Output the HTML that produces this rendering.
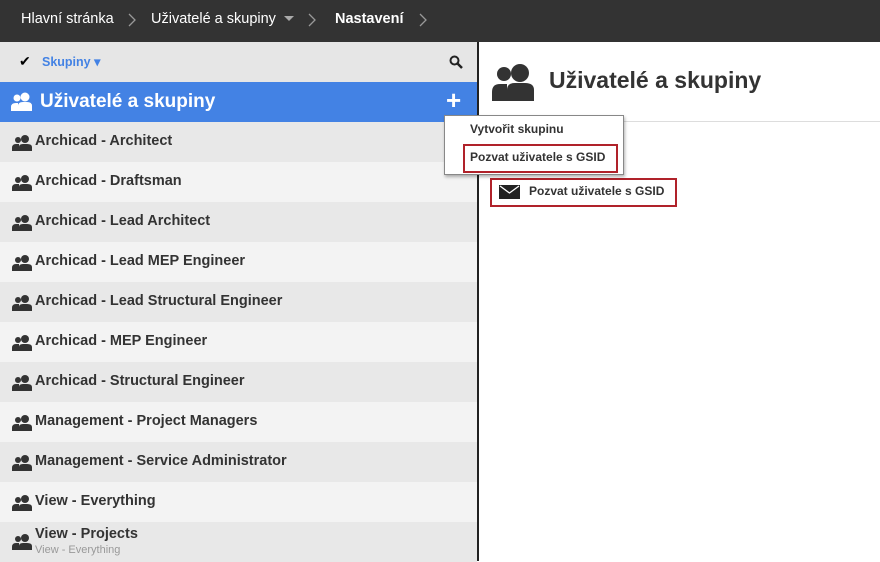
<!DOCTYPE html><html><head><style>
body{margin:0;width:880px;height:561px;overflow:hidden;font-family:"Liberation Sans",sans-serif;background:#fff;position:relative}
.top{position:absolute;left:0;top:0;width:880px;height:42px;background:#333;color:#fff;font-size:15px}
.top span{position:absolute;top:11px}
.left{position:absolute;left:0;top:42px;width:477px;height:519px;background:#f0f0f0}
.vline{position:absolute;left:477px;top:42px;width:2px;height:519px;background:#222}
.filter{height:40px;background:#e6e6e6;position:relative}
.blue{height:40px;background:#4382e4;color:#fff;font-weight:bold;font-size:19px;position:relative}
.row{height:40px;position:relative;font-weight:bold;font-size:14.5px;color:#333}
.row:nth-child(odd){background:#e8e8e8}.row:nth-child(even){background:#f3f3f3}
.row .t{position:absolute;left:35px;top:11px}
.ic{position:absolute;left:12px;top:13px}
</style></head><body>
<div class="top">
<span style="left:21px;font-size:14.5px">Hlavní stránka</span>
<svg style="position:absolute;left:128px;top:13px" width="8" height="14"><path d="M1 1l6 6-6 6" stroke="#999" fill="none" stroke-width="1.3"/></svg>
<span style="left:151px;font-size:14.5px">Uživatelé a skupiny</span>
<span style="left:284px;top:16px;width:0;height:0;border:5px solid transparent;border-top-color:#aaa"></span>
<svg style="position:absolute;left:308px;top:13px" width="8" height="14"><path d="M1 1l6 6-6 6" stroke="#999" fill="none" stroke-width="1.3"/></svg>
<span style="left:335px;font-weight:bold;font-size:14.5px">Nastavení</span>
<svg style="position:absolute;left:419px;top:13px" width="8" height="14"><path d="M1 1l6 6-6 6" stroke="#999" fill="none" stroke-width="1.3"/></svg>
</div>
<div class="left">
<div class="filter"><span style="position:absolute;left:19px;top:11px;font-size:14px">✔</span><span style="position:absolute;left:42px;top:12px;color:#4382e4;font-weight:bold;font-size:12.5px">Skupiny ▾</span>
<svg style="position:absolute;left:449px;top:13px" width="14" height="14"><circle cx="5.5" cy="5.5" r="4" stroke="#222" stroke-width="2" fill="none"/><path d="M8.5 8.5L13 13" stroke="#222" stroke-width="2.5"/></svg></div>
<div class="blue"><svg style="position:absolute;left:11px;top:10px" width="22" height="20"><circle cx="6" cy="6" r="3.5" fill="#fff"/><circle cx="14" cy="5" r="4.5" fill="#fff"/><path d="M0 19v-4q0-4 5-4h2v8z" fill="#fff"/><path d="M7 19v-5q0-4 5-4h4q5 0 5 4v5z" fill="#fff"/></svg><span style="position:absolute;left:40px;top:9px">Uživatelé a skupiny</span><span style="position:absolute;left:446px;top:3px;font-size:26px">+</span></div>
<div>
<div class="row"><svg class="ic" width="22" height="16"><circle cx="6" cy="5" r="3" fill="#333"/><circle cx="13" cy="4" r="4" fill="#333"/><path d="M0 16v-3q0-4 4-4h3v7z" fill="#333"/><path d="M7 16v-4q0-3 4-3h4q5 0 5 3v4z" fill="#333"/></svg><span class="t">Archicad - Architect</span></div>
<div class="row"><svg class="ic" width="22" height="16"><circle cx="6" cy="5" r="3" fill="#333"/><circle cx="13" cy="4" r="4" fill="#333"/><path d="M0 16v-3q0-4 4-4h3v7z" fill="#333"/><path d="M7 16v-4q0-3 4-3h4q5 0 5 3v4z" fill="#333"/></svg><span class="t">Archicad - Draftsman</span></div>
<div class="row"><svg class="ic" width="22" height="16"><circle cx="6" cy="5" r="3" fill="#333"/><circle cx="13" cy="4" r="4" fill="#333"/><path d="M0 16v-3q0-4 4-4h3v7z" fill="#333"/><path d="M7 16v-4q0-3 4-3h4q5 0 5 3v4z" fill="#333"/></svg><span class="t">Archicad - Lead Architect</span></div>
<div class="row"><svg class="ic" width="22" height="16"><circle cx="6" cy="5" r="3" fill="#333"/><circle cx="13" cy="4" r="4" fill="#333"/><path d="M0 16v-3q0-4 4-4h3v7z" fill="#333"/><path d="M7 16v-4q0-3 4-3h4q5 0 5 3v4z" fill="#333"/></svg><span class="t">Archicad - Lead MEP Engineer</span></div>
<div class="row"><svg class="ic" width="22" height="16"><circle cx="6" cy="5" r="3" fill="#333"/><circle cx="13" cy="4" r="4" fill="#333"/><path d="M0 16v-3q0-4 4-4h3v7z" fill="#333"/><path d="M7 16v-4q0-3 4-3h4q5 0 5 3v4z" fill="#333"/></svg><span class="t">Archicad - Lead Structural Engineer</span></div>
<div class="row"><svg class="ic" width="22" height="16"><circle cx="6" cy="5" r="3" fill="#333"/><circle cx="13" cy="4" r="4" fill="#333"/><path d="M0 16v-3q0-4 4-4h3v7z" fill="#333"/><path d="M7 16v-4q0-3 4-3h4q5 0 5 3v4z" fill="#333"/></svg><span class="t">Archicad - MEP Engineer</span></div>
<div class="row"><svg class="ic" width="22" height="16"><circle cx="6" cy="5" r="3" fill="#333"/><circle cx="13" cy="4" r="4" fill="#333"/><path d="M0 16v-3q0-4 4-4h3v7z" fill="#333"/><path d="M7 16v-4q0-3 4-3h4q5 0 5 3v4z" fill="#333"/></svg><span class="t">Archicad - Structural Engineer</span></div>
<div class="row"><svg class="ic" width="22" height="16"><circle cx="6" cy="5" r="3" fill="#333"/><circle cx="13" cy="4" r="4" fill="#333"/><path d="M0 16v-3q0-4 4-4h3v7z" fill="#333"/><path d="M7 16v-4q0-3 4-3h4q5 0 5 3v4z" fill="#333"/></svg><span class="t">Management - Project Managers</span></div>
<div class="row"><svg class="ic" width="22" height="16"><circle cx="6" cy="5" r="3" fill="#333"/><circle cx="13" cy="4" r="4" fill="#333"/><path d="M0 16v-3q0-4 4-4h3v7z" fill="#333"/><path d="M7 16v-4q0-3 4-3h4q5 0 5 3v4z" fill="#333"/></svg><span class="t">Management - Service Administrator</span></div>
<div class="row"><svg class="ic" width="22" height="16"><circle cx="6" cy="5" r="3" fill="#333"/><circle cx="13" cy="4" r="4" fill="#333"/><path d="M0 16v-3q0-4 4-4h3v7z" fill="#333"/><path d="M7 16v-4q0-3 4-3h4q5 0 5 3v4z" fill="#333"/></svg><span class="t">View - Everything</span></div>
<div class="row"><svg class="ic" width="22" height="16" style="top:12px"><circle cx="6" cy="5" r="3" fill="#333"/><circle cx="13" cy="4" r="4" fill="#333"/><path d="M0 16v-3q0-4 4-4h3v7z" fill="#333"/><path d="M7 16v-4q0-3 4-3h4q5 0 5 3v4z" fill="#333"/></svg><span class="t" style="top:4px">View - Projects</span><span style="position:absolute;left:35px;top:22px;font-size:11px;color:#999;font-weight:normal">View - Everything</span></div>
</div></div>
<div class="vline"></div>
<svg style="position:absolute;left:492px;top:62px" width="43" height="40"><circle cx="12" cy="12" r="7" fill="#333"/><circle cx="28" cy="11" r="9" fill="#333"/><path d="M0 39v-9q0-8 8-8h7v17z" fill="#333"/><path d="M15 39v-11q0-7 8-7h10q9 0 9 7v11z" fill="#333"/></svg>
<div style="position:absolute;left:549px;top:67px;font-size:23px;font-weight:bold;color:#333">Uživatelé a skupiny</div>
<div style="position:absolute;left:479px;top:121px;width:401px;height:1px;background:#ddd"></div>
<div style="position:absolute;left:616px;top:146px;font-size:12px;font-weight:bold;color:#333">u</div>
<div style="position:absolute;left:490px;top:178px;width:183px;height:25px;border:2px solid #b0222a"></div>
<svg style="position:absolute;left:499px;top:185px" width="21" height="14"><rect width="21" height="14" fill="#222"/><path d="M1 1l9.5 7 9.5-7" stroke="#fff" stroke-width="1.3" fill="none"/></svg>
<div style="position:absolute;left:529px;top:184px;font-size:12px;font-weight:bold;color:#333">Pozvat uživatele s GSID</div>
<div style="position:absolute;left:444px;top:115px;width:178px;height:58px;background:#fff;border:1px solid #888;box-shadow:1px 2px 3px rgba(0,0,0,.3)"></div>
<div style="position:absolute;left:470px;top:122px;font-size:12px;font-weight:bold;color:#333">Vytvořit skupinu</div>
<div style="position:absolute;left:463px;top:144px;width:151px;height:25px;border:2px solid #b0222a"></div>
<div style="position:absolute;left:470px;top:150px;font-size:12px;font-weight:bold;color:#333">Pozvat uživatele s GSID</div>
</body></html>
